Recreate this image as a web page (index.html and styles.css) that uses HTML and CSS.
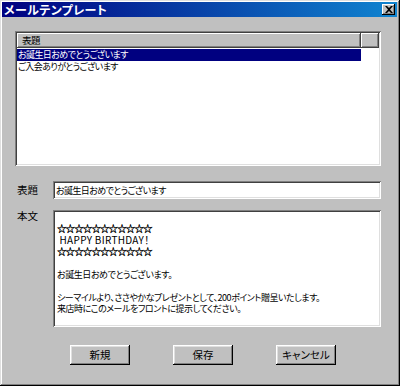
FILE: index.html
```html
<!DOCTYPE html>
<html lang="ja">
<head>
<meta charset="utf-8">
<link rel="stylesheet" href="styles.css">
</head>
<body>
<div class="window">
  <div class="titlebar">
    <span class="title">メールテンプレート</span>
    <span class="close"><svg width="8" height="7" viewBox="0 0 8 7"><path d="M0 0h2l2 2 2-2h2L5 3.5 8 7H6L4 5 2 7H0l3-3.5z" fill="#000"/></svg></span>
  </div>
  <div class="content">
    <div class="listbox">
      <div class="list-header">
        <div class="hcell hcell-main">表題</div>
        <div class="hcell hcell-rest"></div>
      </div>
      <div class="rows">
        <div class="row selected">お誕生日おめでとうございます</div>
        <div class="row">ご入会ありがとうございます</div>
      </div>
    </div>
    <div class="field field-subject">
      <div class="label">表題</div>
      <div class="input">お誕生日おめでとうございます</div>
    </div>
    <div class="field field-body">
      <div class="label">本文</div>
      <div class="textarea">
        <div class="line">&nbsp;</div>
        <div class="line stars">☆☆☆☆☆☆☆☆☆☆☆</div>
        <div class="line latin">&nbsp;HAPPY BIRTHDAY！</div>
        <div class="line stars">☆☆☆☆☆☆☆☆☆☆☆</div>
        <div class="line">&nbsp;</div>
        <div class="line">お誕生日おめでとうございます。</div>
        <div class="line">&nbsp;</div>
        <div class="line">シーマイルより、ささやかなプレゼントとして、200ポイント贈呈いたします。</div>
        <div class="line">来店時にこのメールをフロントに提示してください。</div>
      </div>
    </div>
    <div class="buttons">
      <div class="btn">新規</div>
      <div class="btn">保存</div>
      <div class="btn">キャンセル</div>
    </div>
  </div>
</div>
</body>
</html>
```
FILE: styles.css
```css
* { box-sizing: border-box; }
html, body { margin: 0; padding: 0; }
body {
  font-family: "Noto Sans CJK JP", "Liberation Sans", sans-serif;
  font-size: 9px;
  font-feature-settings: "palt";
  letter-spacing: -0.45px;
  color: #000;
  background: #c0c0c0;
}
.window {
  width: 400px;
  height: 386px;
  background: #c0c0c0;
  padding: 2px 3px 3px 2px;
  box-shadow: inset -1px -1px #000, inset 1px 1px #dfdfdf, inset -2px -2px #808080, inset 2px 2px #fff;
  display: flex;
  flex-direction: column;
}
.titlebar {
  height: 15px;
  background: linear-gradient(to right, #000080, #1084d0);
  display: flex;
  align-items: center;
  justify-content: space-between;
  padding: 0 2px 0 2px;
}
.title {
  color: #fff;
  font-weight: bold;
  font-size: 12px;
  letter-spacing: 0.4px;
  line-height: 15px;
}
.close {
  width: 13px;
  height: 11px;
  background: #c0c0c0;
  box-shadow: inset -1px -1px #000, inset 1px 1px #fff, inset -2px -2px #808080;
  display: flex;
  align-items: center;
  justify-content: center;
  padding-bottom: 1px;
}
.content {
  padding: 14px 16px 0 13px;
  display: flex;
  flex-direction: column;
}
.listbox {
  height: 135px;
  background: #fff;
  padding: 2px;
  box-shadow: inset 1px 1px #808080, inset -1px -1px #fff, inset 2px 2px #404040, inset -2px -2px #dfdfdf;
  display: flex;
  flex-direction: column;
}
.list-header {
  display: flex;
  height: 15px;
}
.hcell {
  background: #c0c0c0;
  box-shadow: inset -1px -1px #404040, inset 1px 1px #fff, inset -2px -2px #808080;
  line-height: 14px;
  padding-left: 5px;
}
.hcell-main { width: 344px; font-size: 9.5px; letter-spacing: -0.5px; }
.hcell-rest { flex: 1; }
.rows {
  display: flex;
  flex-direction: column;
  padding-top: 1px;
}
.row {
  width: 344px;
  height: 12px;
  line-height: 12px;
  padding-left: 1px;
  white-space: nowrap;
  letter-spacing: -0.6px;
}
.row.selected {
  background: #000080;
  color: #fff;
}
.field {
  display: flex;
  align-items: flex-start;
}
.field .label {
  width: 38px;
  padding-left: 2px;
  line-height: 12px;
  font-size: 10.5px;
  letter-spacing: 0;
}
.field-subject {
  margin-top: 15px;
  align-items: center;
}
.input {
  width: 328px;
  height: 18px;
  background: #fff;
  padding: 2px 3px 0 3px;
  line-height: 15px;
  white-space: nowrap;
  letter-spacing: -0.6px;
  box-shadow: inset 1px 1px #808080, inset -1px -1px #fff, inset 2px 2px #404040, inset -2px -2px #dfdfdf;
}
.field-body {
  margin-top: 11px;
}
.textarea {
  width: 328px;
  height: 117px;
  background: #fff;
  padding: 1px 3px 0 4px;
  box-shadow: inset 1px 1px #808080, inset -1px -1px #fff, inset 2px 2px #404040, inset -2px -2px #dfdfdf;
}
.line {
  height: 11.5px;
  line-height: 11.5px;
  white-space: nowrap;
}
.line.stars {
  font-size: 9.5px;
  letter-spacing: -0.9px;
  color: #000;
  -webkit-text-stroke: 0.3px #000;
}
.line.latin {
  font-size: 10px;
  letter-spacing: 0.3px;
}
.buttons {
  margin-top: 18px;
  padding-left: 55px;
  display: flex;
  gap: 43px;
}
.btn {
  width: 60px;
  height: 20px;
  background: #c0c0c0;
  box-shadow: inset -1px -1px #000, inset 1px 1px #fff, inset -2px -2px #808080, inset 2px 2px #dfdfdf;
  display: flex;
  align-items: center;
  justify-content: center;
  line-height: 12px;
  font-size: 10.5px;
  letter-spacing: 0;
}
```
